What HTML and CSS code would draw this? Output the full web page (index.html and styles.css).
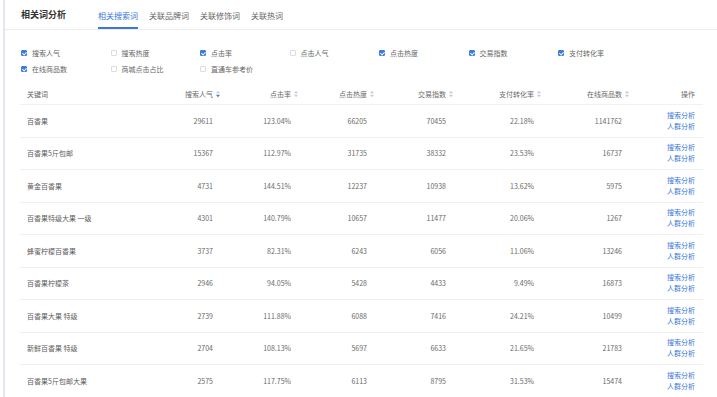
FILE: index.html
```html
<!DOCTYPE html>
<html lang="zh-CN">
<head>
<meta charset="utf-8">
<title>相关词分析</title>
<link rel="stylesheet" href="styles.css">
</head>
<body>
<div class="page">
  <div class="topbar">
    <div class="title">相关词分析</div>
    <div class="tabs">
      <div class="tab active">相关搜索词</div>
      <div class="tab">关联品牌词</div>
      <div class="tab">关联修饰词</div>
      <div class="tab">关联热词</div>
    </div>
  </div>

  <div class="filters">
    <label class="filter"><span class="cb on"></span>搜索人气</label>
    <label class="filter"><span class="cb"></span>搜索热度</label>
    <label class="filter"><span class="cb on"></span>点击率</label>
    <label class="filter"><span class="cb"></span>点击人气</label>
    <label class="filter"><span class="cb on"></span>点击热度</label>
    <label class="filter"><span class="cb on"></span>交易指数</label>
    <label class="filter"><span class="cb on"></span>支付转化率</label>
    <label class="filter"><span class="cb on"></span>在线商品数</label>
    <label class="filter"><span class="cb"></span>商城点击占比</label>
    <label class="filter"><span class="cb"></span>直通车参考价</label>
  </div>

  <div class="table">
    <div class="row head">
      <div class="cell kw">关键词</div>
      <div class="cell hnum">搜索人气<svg class="sort" viewBox="0 0 4 8" width="4" height="8"><path d="M0 3.2L2 0.8L4 3.2Z" fill="#c9ccd4"/><path d="M0 4.8L2 7.2L4 4.8Z" fill="#3a7be0"/></svg></div>
      <div class="cell hnum">点击率<svg class="sort" viewBox="0 0 4 8" width="4" height="8"><path d="M0 3.2L2 0.8L4 3.2Z" fill="#c9ccd4"/><path d="M0 4.8L2 7.2L4 4.8Z" fill="#c9ccd4"/></svg></div>
      <div class="cell hnum">点击热度<svg class="sort" viewBox="0 0 4 8" width="4" height="8"><path d="M0 3.2L2 0.8L4 3.2Z" fill="#c9ccd4"/><path d="M0 4.8L2 7.2L4 4.8Z" fill="#c9ccd4"/></svg></div>
      <div class="cell hnum">交易指数<svg class="sort" viewBox="0 0 4 8" width="4" height="8"><path d="M0 3.2L2 0.8L4 3.2Z" fill="#c9ccd4"/><path d="M0 4.8L2 7.2L4 4.8Z" fill="#c9ccd4"/></svg></div>
      <div class="cell hnum">支付转化率<svg class="sort" viewBox="0 0 4 8" width="4" height="8"><path d="M0 3.2L2 0.8L4 3.2Z" fill="#c9ccd4"/><path d="M0 4.8L2 7.2L4 4.8Z" fill="#c9ccd4"/></svg></div>
      <div class="cell hnum">在线商品数<svg class="sort" viewBox="0 0 4 8" width="4" height="8"><path d="M0 3.2L2 0.8L4 3.2Z" fill="#c9ccd4"/><path d="M0 4.8L2 7.2L4 4.8Z" fill="#c9ccd4"/></svg></div>
      <div class="cell op">操作</div>
    </div>

    <div class="row">
      <div class="cell kw">百香果</div>
      <div class="cell num">29611</div><div class="cell num">123.04%</div><div class="cell num">66205</div><div class="cell num">70455</div><div class="cell num">22.18%</div><div class="cell num">1141762</div>
      <div class="cell op"><a>搜索分析</a><a>人群分析</a></div>
    </div>
    <div class="row">
      <div class="cell kw">百香果5斤包邮</div>
      <div class="cell num">15367</div><div class="cell num">112.97%</div><div class="cell num">31735</div><div class="cell num">38332</div><div class="cell num">23.53%</div><div class="cell num">16737</div>
      <div class="cell op"><a>搜索分析</a><a>人群分析</a></div>
    </div>
    <div class="row">
      <div class="cell kw">黄金百香果</div>
      <div class="cell num">4731</div><div class="cell num">144.51%</div><div class="cell num">12237</div><div class="cell num">10938</div><div class="cell num">13.62%</div><div class="cell num">5975</div>
      <div class="cell op"><a>搜索分析</a><a>人群分析</a></div>
    </div>
    <div class="row">
      <div class="cell kw">百香果特级大果 一级</div>
      <div class="cell num">4301</div><div class="cell num">140.79%</div><div class="cell num">10657</div><div class="cell num">11477</div><div class="cell num">20.06%</div><div class="cell num">1267</div>
      <div class="cell op"><a>搜索分析</a><a>人群分析</a></div>
    </div>
    <div class="row">
      <div class="cell kw">蜂蜜柠檬百香果</div>
      <div class="cell num">3737</div><div class="cell num">82.31%</div><div class="cell num">6243</div><div class="cell num">6056</div><div class="cell num">11.06%</div><div class="cell num">13246</div>
      <div class="cell op"><a>搜索分析</a><a>人群分析</a></div>
    </div>
    <div class="row">
      <div class="cell kw">百香果柠檬茶</div>
      <div class="cell num">2946</div><div class="cell num">94.05%</div><div class="cell num">5428</div><div class="cell num">4433</div><div class="cell num">9.49%</div><div class="cell num">16873</div>
      <div class="cell op"><a>搜索分析</a><a>人群分析</a></div>
    </div>
    <div class="row">
      <div class="cell kw">百香果大果 特级</div>
      <div class="cell num">2739</div><div class="cell num">111.88%</div><div class="cell num">6088</div><div class="cell num">7416</div><div class="cell num">24.21%</div><div class="cell num">10499</div>
      <div class="cell op"><a>搜索分析</a><a>人群分析</a></div>
    </div>
    <div class="row">
      <div class="cell kw">新鲜百香果 特级</div>
      <div class="cell num">2704</div><div class="cell num">108.13%</div><div class="cell num">5697</div><div class="cell num">6633</div><div class="cell num">21.65%</div><div class="cell num">21783</div>
      <div class="cell op"><a>搜索分析</a><a>人群分析</a></div>
    </div>
    <div class="row">
      <div class="cell kw">百香果5斤包邮大果</div>
      <div class="cell num">2575</div><div class="cell num">117.75%</div><div class="cell num">6113</div><div class="cell num">8795</div><div class="cell num">31.53%</div><div class="cell num">15474</div>
      <div class="cell op"><a>搜索分析</a><a>人群分析</a></div>
    </div>
  </div>
</div>
</body>
</html>
```

FILE: styles.css
```css
* { box-sizing: border-box; }
html, body { margin: 0; padding: 0; background: #fff; }
body {
  font-family: "Noto Sans CJK SC", "Noto Sans", sans-serif;
  color: #6a6a6a;
  overflow: hidden;
}
.page {
  margin-left: 3px;
  border-left: 2px solid #e6e7ee;
  height: 397px;
  overflow: hidden;
}
.topbar {
  display: flex;
  align-items: stretch;
  height: 30px;
  border-bottom: 1px solid #ececec;
  padding-left: 16px;
}
.title {
  font-size: 9px;
  font-weight: 700;
  color: #333;
  line-height: 29px;
  margin-right: 32px;
}
.tabs { display: flex; gap: 11px; }
.tab {
  font-size: 8px;
  color: #666;
  height: 29px;
  display: flex;
  align-items: center;
  padding-top: 3px;
  border-bottom: 2px solid transparent;
}
.tab.active { color: #3a78d8; border-bottom-color: #3a78d8; }

.filters {
  display: grid;
  grid-template-columns: repeat(7, 89.5px);
  grid-auto-rows: 16px;
  padding: 15px 0 0 16px;
}
.filter {
  display: flex;
  align-items: center;
  gap: 5px;
  font-size: 7px;
  color: #666;
}
.cb {
  width: 6px;
  height: 6px;
  border: 1px solid #dcdde2;
  border-radius: 1px;
  background: #fff;
  position: relative;
  flex: none;
}
.cb.on { background: #3a7be0; border-color: #3a7be0; }
.cb.on::after {
  content: "";
  position: absolute;
  left: 1.2px;
  top: 0;
  width: 1.6px;
  height: 3px;
  border-right: 1px solid #fff;
  border-bottom: 1px solid #fff;
  transform: rotate(45deg);
}

.table {
  margin: 6px 0 0 15px;
  width: 683px;
  font-size: 7px;
}
.row {
  display: grid;
  grid-template-columns: 130px 70px 78px 76px 79px 88px 88px 74px;
  height: 32.5px;
  border-bottom: 1px solid #f1f1f3;
  align-items: center;
}
.row.head { height: 22px; }
.cell { white-space: nowrap; }
.kw { padding-left: 7px; color: #606060; }
.num { text-align: right; padding-right: 7px; }
.hnum {
  display: flex;
  justify-content: flex-end;
  align-items: center;
  padding-right: 0;
}
.sort { margin-left: 3px; display: block; }
.op {
  text-align: right;
  padding-right: 8px;
  display: flex;
  flex-direction: column;
  align-items: flex-end;
  line-height: 11px;
}
.op a { color: #3a78d8; text-decoration: none; }
.row.head .op { line-height: normal; }
```
